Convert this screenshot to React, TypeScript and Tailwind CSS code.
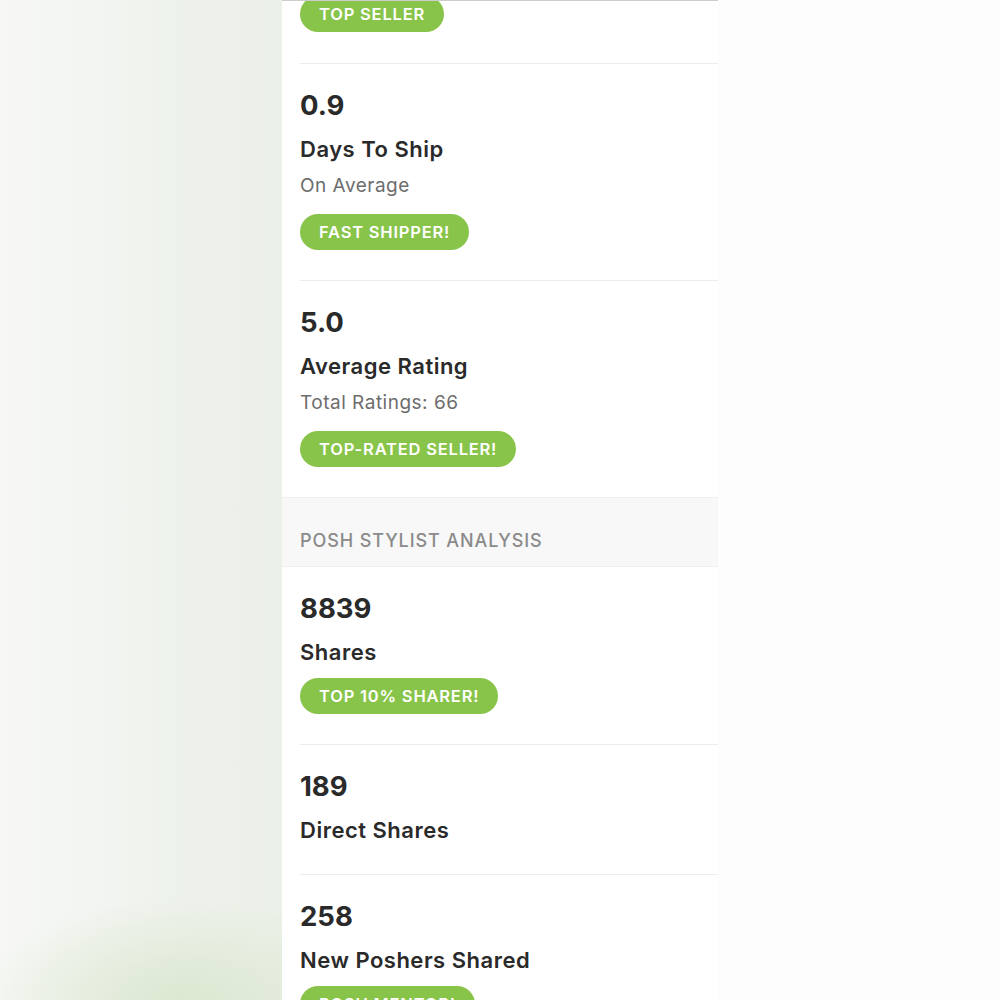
type Stat = {
  value: string;
  label: string;
  sub?: string;
  badge?: string;
};

const sellerStats: Stat[] = [
  { value: "0.9", label: "Days To Ship", sub: "On Average", badge: "FAST SHIPPER!" },
  { value: "5.0", label: "Average Rating", sub: "Total Ratings: 66", badge: "TOP-RATED SELLER!" },
];

const stylistStats: Stat[] = [
  { value: "8839", label: "Shares", badge: "TOP 10% SHARER!" },
  { value: "189", label: "Direct Shares" },
  { value: "258", label: "New Poshers Shared", badge: "POSH MENTOR!" },
];

const Badge = ({ text, className = "" }: { text: string; className?: string }) => (
  <div className={`flex ${className}`}>
    <span className="h-[36px] px-[19px] rounded-full bg-[#88c44a] text-white text-[16.5px] font-semibold tracking-[0.8px] leading-[36px] whitespace-nowrap">
      {text}
    </span>
  </div>
);

const StatRow = ({ stat, first }: { stat: Stat; first?: boolean }) => (
  <div className={`ml-[18px] pt-[24px] pb-[30px] ${first ? "" : "border-t border-[#ececec]"}`}>
    <p className="text-[27.5px] leading-[34px] font-bold text-[#2a2a2a]">{stat.value}</p>
    <p className="mt-[13px] text-[22px] leading-[28px] font-semibold tracking-[0.5px] text-[#2a2a2a]">
      {stat.label}
    </p>
    {stat.sub && (
      <p className="mt-[11px] text-[19px] leading-[24px] tracking-[0.5px] text-[#6d6d6d]">{stat.sub}</p>
    )}
    {stat.badge && <Badge text={stat.badge} className={stat.sub ? "mt-[16px]" : "mt-[12px]"} />}
  </div>
);

export default function App() {
  return (
    <div className="flex w-[1000px] h-[1000px] overflow-hidden font-['Inter',sans-serif]">
      <div className="w-[282px] shrink-0 bg-[radial-gradient(ellipse_75%_10%_at_65%_100%,#dce8d1,rgba(236,241,233,0)),linear-gradient(to_right,#f7f8f6,#eef2ec_60%,#ebf0e8)]" />

      <div className="w-[436px] shrink-0 bg-white border-t border-[#cdcdcd] overflow-hidden">
        <div className="ml-[18px] pb-[31px] -mt-[5px]">
          <Badge text="TOP SELLER" />
        </div>

        {sellerStats.map((s) => (
          <StatRow key={s.label} stat={s} />
        ))}

        <div className="h-[70px] bg-[#f8f8f8] border-t border-b border-[#efefef] pl-[18px] pt-[31px]">
          <p className="text-[18px] leading-[24px] font-medium tracking-[0.9px] text-[#8a8a8a]">
            POSH STYLIST ANALYSIS
          </p>
        </div>

        {stylistStats.map((s, i) => (
          <StatRow key={s.label} stat={s} first={i === 0} />
        ))}
      </div>

      <div className="flex-1 bg-[#fdfdfd]" />
    </div>
  );
}
